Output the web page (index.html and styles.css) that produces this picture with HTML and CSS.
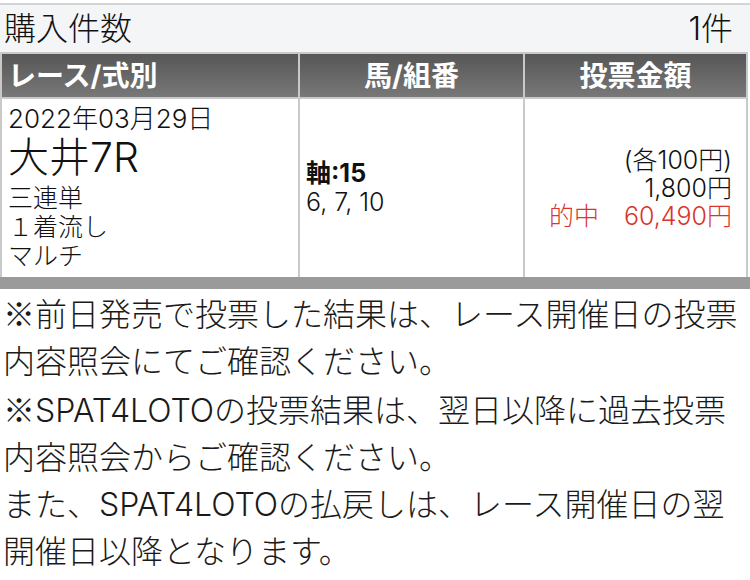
FILE: index.html
```html
<!DOCTYPE html>
<html lang="ja">
<head>
<meta charset="utf-8">
<title>購入件数</title>
<link rel="stylesheet" href="styles.css">
</head>
<body>
<div class="page">
  <div class="count-row">
    <span class="count-label">購入件数</span>
    <span class="count-value">1件</span>
  </div>
  <div class="bets">
    <div class="th th-left">レース/式別</div>
    <div class="th">馬/組番</div>
    <div class="th">投票金額</div>
    <div class="td race">
      <div class="date">2022年03月29日</div>
      <div class="venue">大井7R</div>
      <div class="line">三連単</div>
      <div class="line">１着流し</div>
      <div class="line">マルチ</div>
    </div>
    <div class="td horse">
      <div class="axis">軸:15</div>
      <div class="line">6, 7, 10</div>
    </div>
    <div class="td amount">
      <div class="line">(各100円)</div>
      <div class="line">1,800円</div>
      <div class="line hit">的中　60,490円</div>
    </div>
  </div>
  <div class="bets-foot"></div>
  <div class="notes">
    <p><span class="kome">※</span>前日発売で投票した結果は、レース開催日の投票<br>内容照会にてご確認ください。</p>
    <p><span class="kome">※</span>SPAT4LOTOの投票結果は、翌日以降に過去投票<br>内容照会からご確認ください。</p>
    <p>また、SPAT4LOTOの払戻しは、レース開催日の翌<br>開催日以降となります。</p>
  </div>
</div>
</body>
</html>
```

FILE: styles.css
```css
html, body {
  margin: 0;
  padding: 0;
  background: #ffffff;
}

body {
  font-family: Inter, "Noto Sans CJK JP", sans-serif;
  color: #111111;
  width: 750px;
}

.page {
  margin-top: 3px;
  border-top: 2px solid #d4d4d4;
}

.count-row {
  height: 47px;
  background: #f3f5f7;
  display: flex;
  justify-content: space-between;
  align-items: center;
  padding: 0 17px 0 4px;
  font-size: 32px;
  line-height: 1;
  font-weight: 300;
}

.bets {
  width: 748px;
  box-sizing: border-box;
  display: grid;
  grid-template-columns: 296px 223px 221px;
  grid-template-rows: 43px 178px;
  gap: 2px;
  padding: 2px 2px 0 2px;
  background: #c9c9c9;
}

.th {
  background: linear-gradient(#565656, #787878);
  color: #ffffff;
  font-weight: bold;
  font-size: 28px;
  display: flex;
  align-items: center;
  justify-content: center;
  line-height: 1;
}

.th-left {
  justify-content: flex-start;
  padding-left: 6px;
}

.td {
  background: #ffffff;
  font-size: 25px;
  line-height: 29px;
  font-weight: 300;
}

.race {
  padding: 5px 0 0 6px;
}

.date {
  font-size: 26px;
  line-height: 30px;
}

.venue {
  font-size: 41px;
  line-height: 46px;
  margin-bottom: 4px;
}

.horse {
  display: flex;
  flex-direction: column;
  justify-content: center;
  padding-left: 6px;
}

.axis {
  font-weight: bold;
}

.amount {
  display: flex;
  flex-direction: column;
  justify-content: center;
  align-items: flex-end;
  padding-right: 14px;
  line-height: 28px;
}

.hit {
  color: #d9352c;
}

.bets-foot {
  height: 12px;
  background: #9a9a9a;
}

.notes {
  padding: 0 0 6px 3px;
  border-bottom: 2px solid #cccccc;
  font-size: 32px;
  line-height: 47px;
  font-weight: 300;
  color: #1a1a1a;
  white-space: nowrap;
}

.notes p {
  margin: 0;
}

.kome {
  font-family: "Noto Sans CJK JP", sans-serif;
}
```
